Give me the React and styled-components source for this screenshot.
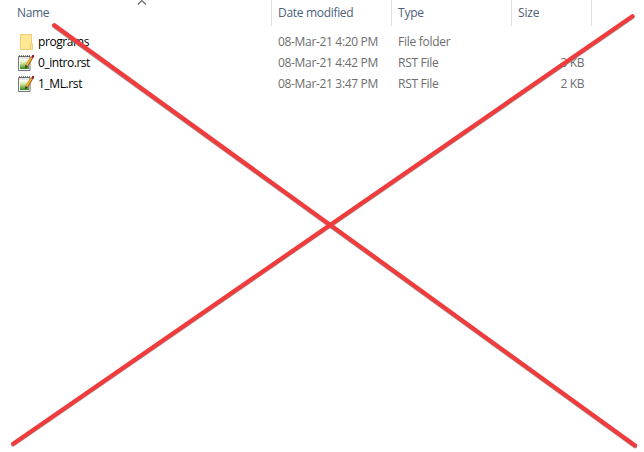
import React from "react";
import styled, { createGlobalStyle } from "styled-components";

const GlobalStyle = createGlobalStyle`
  body { margin: 0; background: #fff; overflow: hidden; }
`;

const Window = styled.main`
  position: relative;
  width: 644px;
  height: 452px;
  overflow: hidden;
  background: #fff;
  font-family: "Open Sans", "Noto Sans", sans-serif;
  font-size: 12px;
`;

const HeaderRow = styled.div`
  position: relative;
  display: grid;
  grid-template-columns: 272px 120px 120px 80px;
  height: 25px;
`;

const HeaderCell = styled.div`
  box-sizing: border-box;
  border-right: 1px solid #e2e2e2;
  padding-left: ${(p) => p.$inset || 6}px;
  line-height: 26px;
  color: #4c607a;
  white-space: nowrap;
`;

const SortArrow = styled.svg`
  position: absolute;
  left: 137px;
  top: 0;
`;

const FileList = styled.div`
  padding-top: 6px;
`;

const FileRow = styled.div`
  display: grid;
  grid-template-columns: 272px 120px 120px 80px;
  height: 21px;
  line-height: 21px;
`;

const NameCell = styled.div`
  display: flex;
  align-items: center;
  gap: 4px;
  padding-left: 18px;
  color: #000;
`;

const Cell = styled.div`
  padding: 0 8px 0 6px;
  color: #6d6d6d;
  white-space: nowrap;
  text-align: ${(p) => (p.$right ? "right" : "left")};
`;

const Label = styled.span`
  letter-spacing: ${(p) => p.$track || 0}px;
`;

const CrossOut = styled.svg`
  position: absolute;
  inset: 0;
`;

function FolderIcon() {
  return (
    <svg width="16" height="16" viewBox="0 0 16 16">
      <path d="M2 0h12v9.500h1V16H2z" fill="#ecd078" />
      <path d="M3 1h10v8.500h-1V15H3z" fill="#ffe794" />
      <path d="M13 10.500h1V15h-1z" fill="#ffe794" />
    </svg>
  );
}

function NoteIcon() {
  return (
    <svg width="16" height="16" viewBox="0 0 16 16" overflow="visible">
      <defs>
        <linearGradient id="page" x1="0" y1="0" x2="0" y2="1">
          <stop offset="0" stopColor="#f5faea" />
          <stop offset="0.35" stopColor="#cfe8a0" />
          <stop offset="1" stopColor="#2f8a1c" />
        </linearGradient>
      </defs>
      <path d="M0.500 1.500h11.500v14H0.500z" fill="#fff" stroke="#747474" />
      <path d="M2 5h9v9H2z" fill="url(#page)" />
      <path d="M1 1h11" stroke="#555" strokeWidth="1.500" strokeDasharray="1 1" />
      <path d="M1.500 3h10" stroke="#999" strokeDasharray="1 1" />
      <path d="M13.700 2.500 8.800 10.800" stroke="#9b5a12" strokeWidth="3" />
      <path d="M13.300 2.700 8.500 10.600" stroke="#ffbe3c" strokeWidth="1.600" />
      <path d="M7.300 10 10 11.600 7 13.500z" fill="#4c3518" />
      <path d="M13.200 2 14.400 0H16v2l-1 1.300z" fill="#8e1c20" />
    </svg>
  );
}

const columns = [
  { title: "Name", inset: 17, track: -0.35 },
  { title: "Date modified", track: -0.31 },
  { title: "Type", track: -0.2 },
  { title: "Size", track: -0.2 },
];

const files = [
  { name: "programs", track: -0.42, date: "08-Mar-21 4:20 PM", type: "File folder", size: "", folder: true },
  { name: "0_intro.rst", track: -0.46, date: "08-Mar-21 4:42 PM", type: "RST File", size: "3 KB" },
  { name: "1_ML.rst", track: -0.4, date: "08-Mar-21 3:47 PM", type: "RST File", size: "2 KB" },
];

export default function App() {
  return (
    <Window>
      <GlobalStyle />
      <HeaderRow>
        {columns.map((c) => (
          <HeaderCell key={c.title} $inset={c.inset}>
            <Label $track={c.track}>{c.title}</Label>
          </HeaderCell>
        ))}
        <SortArrow width="10" height="6" viewBox="0 0 10 6">
          <path d="M0.800 4.500 4.800 0.500 8.800 4.500" fill="none" stroke="#666" strokeWidth="1.100" />
        </SortArrow>
      </HeaderRow>
      <FileList>
        {files.map((f) => (
          <FileRow key={f.name}>
            <NameCell>
              {f.folder ? <FolderIcon /> : <NoteIcon />}
              <Label $track={f.track}>{f.name}</Label>
            </NameCell>
            <Cell><Label $track={-0.33}>{f.date}</Label></Cell>
            <Cell><Label $track={-0.28}>{f.type}</Label></Cell>
            <Cell $right><Label $track={-0.4}>{f.size}</Label></Cell>
          </FileRow>
        ))}
      </FileList>
      <CrossOut width="644" height="452" viewBox="0 0 644 452" fill="none" strokeLinecap="round">
        <g stroke="#777" strokeOpacity="0.65" strokeWidth="4.300">
          <path d="M54 26 635 446.200" />
          <path d="M632.500 17 13 444.500" />
        </g>
        <g stroke="#f03c3c" strokeWidth="4.300">
          <path d="M54.300 25.300 635 445.500" />
          <path d="M632.500 16.300 13.300 443.700" />
        </g>
      </CrossOut>
    </Window>
  );
}
